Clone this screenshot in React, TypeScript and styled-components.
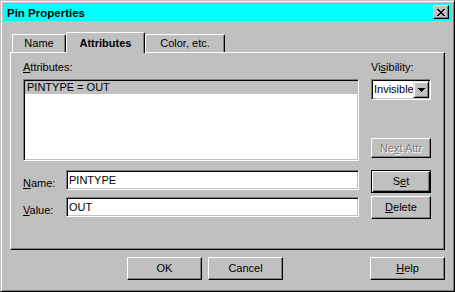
import React from 'react';
import styled, { createGlobalStyle, css } from 'styled-components';

const Global = createGlobalStyle`
  html, body { margin: 0; padding: 0; background: #c0c0c0; }
  body {
    font-family: "Liberation Sans", Arial, sans-serif;
    font-size: 11px;
    line-height: 13px;
    color: #000;
  }
  * { box-sizing: border-box; }
`;

const Window = styled.div`
  width: 455px;
  height: 292px;
  background: #c0c0c0;
  border: 1px solid;
  border-color: #c0c0c0 #000 #000 #c0c0c0;
  box-shadow: inset 1px 1px #fff, inset -1px -1px #808080;
  padding: 2px;
  display: flex;
  flex-direction: column;
`;

const TitleBar = styled.div`
  height: 18px;
  background: #00ffff;
  display: flex;
  align-items: center;
  justify-content: space-between;
  padding: 0 3px 0 4px;
`;

const TitleText = styled.span`
  font-weight: bold;
  font-size: 11.5px;
  line-height: 16px;
  padding-top: 2px;
`;

const CloseButton = styled.div`
  width: 16px;
  height: 14px;
  background: #c0c0c0;
  border: 1px solid;
  border-color: #fff #000 #000 #fff;
  box-shadow: inset -1px -1px #808080;
  padding: 3px 0 0 3px;
  display: flex;
  align-items: flex-start;
  justify-content: flex-start;
  svg { display: block; }
`;

const Body = styled.div`
  padding: 11px 7px 0;
  display: flex;
  flex-direction: column;
`;

const TabStrip = styled.div`
  display: flex;
  align-items: flex-end;
  padding-left: 2px;
  height: 20px;
`;

const Tab = styled.div<{ $active?: boolean; $w: number }>`
  width: ${p => p.$w}px;
  height: ${p => (p.$active ? 21 : 18)}px;
  margin-bottom: ${p => (p.$active ? -1 : 0)}px;
  position: relative;
  z-index: ${p => (p.$active ? 1 : 0)};
  background: #c0c0c0;
  border-top: 1px solid #fff;
  border-left: 1px solid #fff;
  border-right: 1px solid #000;
  border-radius: 2px 2px 0 0;
  box-shadow: inset -1px 0 #808080;
  text-align: center;
  padding-top: ${p => (p.$active ? 4 : 2)}px;
  font-weight: ${p => (p.$active ? 'bold' : 'normal')};
`;

const Panel = styled.div`
  height: 198px;
  border: 1px solid;
  border-color: #fff #000 #000 #fff;
  box-shadow: inset -1px -1px #808080;
  padding: 8px 0 0 12px;
`;

const Grid = styled.div`
  display: grid;
  grid-template-columns: 336px 60px;
  column-gap: 12px;
  align-items: start;
`;

const Label = styled.div`
  height: 13px;
  white-space: nowrap;
`;

const Key = styled.u`
  text-decoration: underline;
  text-underline-offset: 1px;
`;

const sunken = css`
  border: 1px solid;
  border-color: #808080 #fff #fff #808080;
  box-shadow: inset 1px 1px #000, inset -1px -1px #c0c0c0;
`;

const ListBox = styled.div`
  ${sunken};
  height: 82px;
  margin-top: 5px;
  background: #fff;
  padding: 1px;
`;

const ListItem = styled.div<{ $selected?: boolean }>`
  height: 13px;
  padding-left: 2px;
  background: ${p => (p.$selected ? '#c0c0c0' : 'transparent')};
  white-space: nowrap;
`;

const SideStack = styled.div`
  margin-top: 5px;
  height: 82px;
  display: flex;
  flex-direction: column;
`;

const Combo = styled.div`
  ${sunken};
  height: 21px;
  background: #fff;
  padding: 1px;
  display: flex;
  overflow: hidden;
`;

const ComboText = styled.div`
  flex: 1;
  overflow: hidden;
  white-space: nowrap;
  line-height: 17px;
  padding-left: 1px;
`;

const ComboArrow = styled.div`
  width: 16px;
  height: 17px;
  flex: none;
  background: #c0c0c0;
  border: 1px solid;
  border-color: #dfdfdf #000 #000 #dfdfdf;
  box-shadow: inset 1px 1px #fff, inset -1px -1px #808080;
  display: flex;
  align-items: center;
  justify-content: center;
  svg { display: block; }
`;

const Button = styled.button<{ $w: number; $h: number; $default?: boolean }>`
  width: ${p => p.$w}px;
  height: ${p => p.$h}px;
  font: inherit;
  line-height: 13px;
  color: #000;
  background: #c0c0c0;
  border: 1px solid;
  border-color: #fff #000 #000 #fff;
  box-shadow: inset -1px -1px #808080;
  padding: 0;
  margin: 0;
  text-align: center;
  ${p =>
    p.$default &&
    css`
      border-color: #000;
      box-shadow: inset 1px 1px #fff, inset -1px -1px #000, inset -2px -2px #808080;
    `}
  &:disabled {
    color: #808080;
    text-shadow: 1px 1px #fff;
  }
`;

const NextButton = styled(Button)`
  margin-top: auto;
  margin-bottom: 3px;
`;

const RowButton = styled(Button)<{ $top: number }>`
  margin-top: ${p => p.$top}px;
`;

const InputRow = styled.div<{ $top: number }>`
  display: flex;
  margin-top: ${p => p.$top}px;
`;

const InputLabel = styled.div`
  width: 43px;
  flex: none;
  padding-top: 7px;
`;

const TextInput = styled.input`
  ${sunken};
  flex: 1;
  min-width: 0;
  height: 20px;
  background: #fff;
  font: inherit;
  color: #000;
  padding: 0 1px 0 2px;
  margin: 0;
  outline: none;
`;

const Footer = styled.div`
  display: flex;
  padding: 7px 0 0;
`;

const OkButton = styled(Button)`
  margin-left: 117px;
`;

const CancelButton = styled(Button)`
  margin-left: 6px;
`;

const HelpButton = styled(Button)`
  margin-left: auto;
`;

const CloseGlyph = () => (
  <svg width="8" height="7" viewBox="0 0 8 7" shapeRendering="crispEdges">
    <path
      fill="#000"
      d="M0 0h2v1h-2z M6 0h2v1h-2z M1 1h2v1h-2z M5 1h2v1h-2z M2 2h4v1h-4z M3 3h2v1h-2z M2 4h4v1h-4z M1 5h2v1h-2z M5 5h2v1h-2z M0 6h2v1h-2z M6 6h2v1h-2z"
    />
  </svg>
);

const DownArrow = () => (
  <svg width="7" height="4" viewBox="0 0 7 4" shapeRendering="crispEdges">
    <path fill="#000" d="M0 0h7v1h-7z M1 1h5v1h-5z M2 2h3v1h-3z M3 3h1v1h-1z" />
  </svg>
);

export default function App() {
  return (
    <>
      <Global />
      <Window>
        <TitleBar>
          <TitleText>Pin Properties</TitleText>
          <CloseButton>
            <CloseGlyph />
          </CloseButton>
        </TitleBar>
        <Body>
          <TabStrip>
            <Tab $w={54}>Name</Tab>
            <Tab $w={79} $active>
              Attributes
            </Tab>
            <Tab $w={80}>Color, etc.</Tab>
          </TabStrip>
          <Panel>
            <Grid>
              <Label>
                <Key>A</Key>ttributes:
              </Label>
              <Label>
                Vi<Key>s</Key>ibility:
              </Label>
              <ListBox>
                <ListItem $selected>PINTYPE = OUT</ListItem>
              </ListBox>
              <SideStack>
                <Combo>
                  <ComboText>Invisible</ComboText>
                  <ComboArrow>
                    <DownArrow />
                  </ComboArrow>
                </Combo>
                <NextButton $w={60} $h={20} disabled>
                  Ne<Key>x</Key>t Attr
                </NextButton>
              </SideStack>
              <InputRow $top={9}>
                <InputLabel>
                  <Key>N</Key>ame:
                </InputLabel>
                <TextInput defaultValue="PINTYPE" readOnly />
              </InputRow>
              <RowButton $w={60} $h={23} $top={9} $default>
                S<Key>e</Key>t
              </RowButton>
              <InputRow $top={4}>
                <InputLabel>
                  <Key>V</Key>alue:
                </InputLabel>
                <TextInput defaultValue="OUT" readOnly />
              </InputRow>
              <RowButton $w={60} $h={23} $top={3}>
                <Key>D</Key>elete
              </RowButton>
            </Grid>
          </Panel>
          <Footer>
            <OkButton $w={75} $h={23}>OK</OkButton>
            <CancelButton $w={75} $h={23}>Cancel</CancelButton>
            <HelpButton $w={75} $h={23}>
              <Key>H</Key>elp
            </HelpButton>
          </Footer>
        </Body>
      </Window>
    </>
  );
}
